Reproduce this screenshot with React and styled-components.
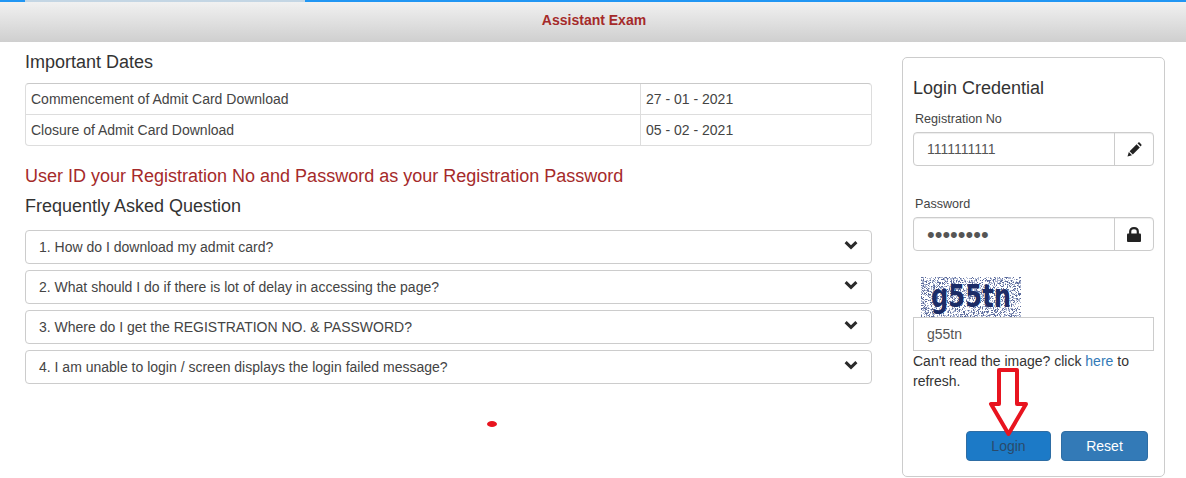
import styled, { createGlobalStyle } from "styled-components"

const GlobalStyle = createGlobalStyle`
    html, body {
        margin: 0;
        padding: 0;
        background: #fff;
        font-family: "Liberation Sans", Arial, sans-serif;
        font-size: 14px;
        color: #333;
    }
`

const dates = [
    { label: "Commencement of Admit Card Download", date: "27 - 01 - 2021" },
    { label: "Closure of Admit Card Download", date: "05 - 02 - 2021" },
]

const questions = [
    "1. How do I download my admit card?",
    "2. What should I do if there is lot of delay in accessing the page?",
    "3. Where do I get the REGISTRATION NO. & PASSWORD?",
    "4. I am unable to login / screen displays the login failed message?",
]

// fixed noise so the captcha looks the same on every load
function captchaNoise() {
    let seed = 77
    const next = () => {
        seed = (seed * 16807) % 2147483647
        return seed / 2147483647
    }
    const dots = []
    for (let y = 0; y < 40; y += 1) {
        for (let x = 0; x < 100; x += 1) {
            if (next() < 0.45) dots.push({ x, y, dark: next() < 0.45 })
        }
    }
    return dots
}

const noise = captchaNoise()

const Pencil = () => (
    <svg width="15" height="15" viewBox="0 0 15 15">
        <path d="M0.5 14.5 L1.8 10 L5 13.2 Z" fill="#222" />
        <path d="M2.6 9.2 L9.6 2.2 L12.8 5.4 L5.8 12.4 Z" fill="#222" />
        <path d="M10.5 1.3 L11.4 0.5 Q12 0.2 12.6 0.6 L14.4 2.4 Q14.8 3 14.4 3.6 L13.6 4.5 Z" fill="#222" />
    </svg>
)

const Lock = () => (
    <svg width="14" height="15" viewBox="0 0 14 15">
        <path d="M1 6.5 H13 Q14 6.5 14 7.5 V14 Q14 15 13 15 H1 Q0 15 0 14 V7.5 Q0 6.5 1 6.5 Z" fill="#222" />
        <path d="M3.2 7 V4.6 Q3.2 1.2 7 1.2 Q10.8 1.2 10.8 4.6 V7" fill="none" stroke="#222" strokeWidth="2.2" />
    </svg>
)

const Chevron = () => (
    <svg width="14" height="10" viewBox="0 0 14 10">
        <path d="M1.6 2.2 L7 7.4 L12.4 2.2" fill="none" stroke="#2a2a2a" strokeWidth="3" />
    </svg>
)

export default function App() {
    return (
        <>
            <GlobalStyle />
            <TopBar>
                <ActiveTab />
                <ExamTitle>Assistant Exam</ExamTitle>
            </TopBar>
            <Content>
                <MainColumn>
                    <Heading>Important Dates</Heading>
                    <DatesTable>
                        {dates.map((row) => (
                            <DateRow key={row.label}>
                                <DateLabel>{row.label}</DateLabel>
                                <DateValue>{row.date}</DateValue>
                            </DateRow>
                        ))}
                    </DatesTable>
                    <Notice>User ID your Registration No and Password as your Registration Password</Notice>
                    <Heading>Frequently Asked Question</Heading>
                    <FaqList>
                        {questions.map((q) => (
                            <FaqItem key={q}>
                                <span>{q}</span>
                                <FaqIcon><Chevron /></FaqIcon>
                            </FaqItem>
                        ))}
                    </FaqList>
                    <RedDot />
                </MainColumn>

                <LoginPanel>
                    <PanelTitle>Login Credential</PanelTitle>
                    <FieldLabel>Registration No</FieldLabel>
                    <InputGroup>
                        <InputValue>1111111111</InputValue>
                        <Addon><Pencil /></Addon>
                    </InputGroup>
                    <FieldLabel $spaced>Password</FieldLabel>
                    <InputGroup>
                        <PasswordDots>••••••••</PasswordDots>
                        <Addon><Lock /></Addon>
                    </InputGroup>
                    <Captcha>
                        <svg width="100" height="40" viewBox="0 0 100 40">
                            {noise.map((d) => (
                                <rect
                                    key={`${d.x}-${d.y}`}
                                    x={d.x}
                                    y={d.y}
                                    width="1"
                                    height="1"
                                    fill={d.dark ? "#5d6c9c" : "#a9b3cf"}
                                />
                            ))}
                            <text
                                x="10"
                                y="30"
                                fontFamily="'DejaVu Sans', 'Liberation Sans', sans-serif"
                                fontWeight="700"
                                fontSize="32"
                                textLength="80"
                                lengthAdjust="spacingAndGlyphs"
                                fill="#1b2c66"
                            >
                                g55tn
                            </text>
                        </svg>
                    </Captcha>
                    <CaptchaInput>g55tn</CaptchaInput>
                    <HelpText>
                        Can't read the image? click <HelpLink href="#">here</HelpLink> to refresh.
                    </HelpText>
                    <ButtonRow>
                        <LoginButton>Login</LoginButton>
                        <ResetButton>Reset</ResetButton>
                    </ButtonRow>
                    <ArrowMark width="46" height="76" viewBox="0 0 46 76">
                        <path
                            d="M13 4 H31 V38 H40 L22.5 68 L5 38 H13 Z"
                            fill="none"
                            stroke="#e8141f"
                            strokeWidth="4"
                            strokeLinejoin="round"
                        />
                    </ArrowMark>
                </LoginPanel>
            </Content>
        </>
    )
}

const TopBar = styled.header`
    position: relative;
    box-sizing: border-box;
    height: 42px;
    border-top: 2px solid #2196f3;
    background: linear-gradient(to bottom, #f1f1f1, #cfcfcf);
    display: flex;
    align-items: center;
    justify-content: center;
    padding-bottom: 5px;
    padding-left: 2px;
`

const ActiveTab = styled.div`
    position: absolute;
    left: 25px;
    top: -2px;
    width: 280px;
    height: 2px;
    background: #c4d6e4;
`

const ExamTitle = styled.h1`
    margin: 0;
    font-size: 14px;
    line-height: 16px;
    font-weight: 700;
    color: #a52a2a;
`

const Content = styled.main`
    display: flex;
    align-items: flex-start;
    padding: 10px 21px 0 25px;
    gap: 30px;
`

const MainColumn = styled.section`
    position: relative;
    width: 847px;
    flex: none;
`

const Heading = styled.h2`
    margin: 0;
    font-size: 18px;
    line-height: 20px;
    font-weight: 400;
    color: #333;
`

const DatesTable = styled.div`
    margin-top: 11px;
    border: 1px solid #ddd;
    border-top-color: #c9c9c9;
    border-radius: 4px;
`

const DateRow = styled.div`
    display: grid;
    grid-template-columns: 614px 1fr;
    height: 30px;
    & + & {
        box-sizing: content-box;
        border-top: 1px solid #ddd;
    }
`

const DateLabel = styled.div`
    padding-left: 5px;
    line-height: 30px;
    color: #444;
`

const DateValue = styled(DateLabel)`
    border-left: 1px solid #ddd;
`

const Notice = styled.p`
    margin: 20px 0 10px;
    font-size: 18px;
    line-height: 20px;
    color: #a52a2a;
`

const FaqList = styled.div`
    margin-top: 14px;
    display: flex;
    flex-direction: column;
    gap: 6px;
`

const FaqItem = styled.div`
    box-sizing: border-box;
    height: 34px;
    padding: 0 13px 0 13px;
    border: 1px solid #ccc;
    border-radius: 4px;
    display: flex;
    justify-content: space-between;
    color: #444;
    line-height: 32px;
`

const FaqIcon = styled.span`
    display: flex;
    margin-top: 9px;
    height: 10px;
`

const RedDot = styled.span`
    position: absolute;
    left: 462px;
    top: 369px;
    width: 10px;
    height: 6px;
    border-radius: 50%;
    background: #e8141f;
`

const LoginPanel = styled.aside`
    position: relative;
    box-sizing: border-box;
    width: 263px;
    height: 420px;
    margin-top: 5px;
    flex: none;
    padding: 20px 10px 0 10px;
    border: 1px solid #ccc;
    border-radius: 5px;
`

const PanelTitle = styled.h2`
    margin: 0;
    font-size: 18px;
    line-height: 20px;
    font-weight: 400;
    color: #333;
`

const FieldLabel = styled.label`
    display: block;
    margin: ${(p) => (p.$spaced ? "31px" : "14px")} 0 6px 2px;
    font-size: 12.6px;
    line-height: 14px;
    color: #444;
`

const InputGroup = styled.div`
    box-sizing: border-box;
    height: 34px;
    display: flex;
    border: 1px solid #ccc;
    border-radius: 4px;
    box-shadow: inset 0 1px 1px rgba(0, 0, 0, 0.075);
`

const InputValue = styled.div`
    flex: 1;
    padding-left: 13px;
    line-height: 32px;
    color: #555;
`

const PasswordDots = styled(InputValue)`
    font-size: 22px;
    line-height: 33px;
`

const Addon = styled.div`
    width: 38px;
    border-left: 1px solid #ccc;
    display: flex;
    align-items: center;
    justify-content: center;
`

const Captcha = styled.div`
    margin: 26px 0 0 8px;
    height: 40px;
    svg {
        display: block;
    }
`

const CaptchaInput = styled.div`
    box-sizing: border-box;
    height: 34px;
    padding-left: 13px;
    border: 1px solid #ccc;
    line-height: 32px;
    color: #555;
`

const HelpText = styled.p`
    margin: 0;
    line-height: 20px;
    color: #333;
`

const HelpLink = styled.a`
    color: #337ab7;
    text-decoration: none;
`

const ButtonRow = styled.div`
    margin: 40px 0 0 53px;
    display: flex;
    gap: 10px;
`

const LoginButton = styled.button`
    width: 85px;
    height: 30px;
    padding: 0;
    border: 1px solid #2e6da4;
    border-radius: 4px;
    background: #1c7ac7;
    color: #2a4a6a;
    font-family: inherit;
    font-size: 14px;
`

const ResetButton = styled(LoginButton)`
    width: 87px;
    background: #337ab7;
    color: #fff;
`

const ArrowMark = styled.svg`
    position: absolute;
    left: 83px;
    top: 308px;
`
